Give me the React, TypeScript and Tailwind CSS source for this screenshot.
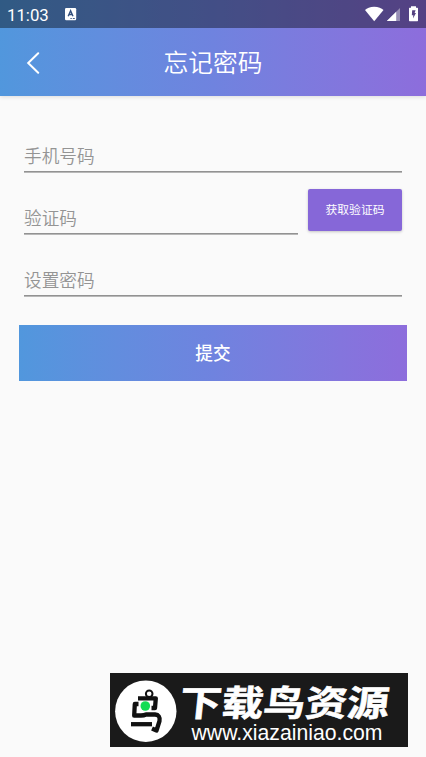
import React from 'react';

const cjk = "font-['Roboto','Noto_Sans_CJK_SC',sans-serif]";

function StatusBar() {
  return (
    <div className="flex h-7 items-center bg-black/40 pl-[7px] pr-[7px] text-white">
      <span className="w-[58px] pt-[3px] text-[16.8px] leading-[25px] font-[450]">11:03</span>
      <svg width="12" height="13" viewBox="0 0 12 13">
        <rect width="11.2" height="12.2" rx="1.2" fill="#fff" />
        <path d="M3.2 8.2L5.6 2.8L8 8.2M4 6.5H7.2" fill="none" stroke="#33507e" strokeWidth="1.4" />
        <path d="M5.4 10.5H6.8M7.8 10.5H9.8" stroke="#33507e" strokeWidth="0.9" />
      </svg>
      <svg className="ml-auto" width="54" height="16" viewBox="0 0 54 16">
        <path d="M0 4C2 2.2 5 .8 9.2 .8S16.5 2.2 18.5 4L9.2 15.2Z" fill="#fff" />
        <path d="M35 2V15H21.8Z" fill="#fff" fillOpacity=".4" />
        <path d="M31.2 5.8V15H21.8Z" fill="#fff" />
        <path d="M46 .3H51V1.7H52.4Q53 1.7 53 2.4V14.6Q53 15.3 52.4 15.3H44.6Q44 15.3 44 14.6V2.4Q44 1.7 44.6 1.7H46Z" fill="#fff" />
        <path d="M47.2 4.2H50.6L49.6 7H51L48 12.6L48.3 9.2H46.8Z" fill="#54417f" />
      </svg>
    </div>
  );
}

function Field({ label }: { label: string }) {
  return (
    <div className="flex h-[29px] w-full flex-col justify-between">
      <span className="text-[17.65px] leading-[26px] font-[350] text-[#949494]">{label}</span>
      <div className="h-[2px] shrink-0 border-t border-[#929292] bg-[#b8b8b8]" />
    </div>
  );
}

function Watermark() {
  return (
    <svg className="block" width="298" height="74" viewBox="0 0 298 74">
      <rect width="298" height="74" fill="#1a1a1a" />
      <circle cx="35.8" cy="38.2" r="30.7" fill="#fff" />
      <g fill="none" stroke="#111" strokeWidth="4.3" strokeLinejoin="round">
        <circle cx="39.2" cy="20.8" r="3.3" strokeWidth="2" />
        <path d="M28 25.3H45.8L45 35H41.5" />
        <path d="M28.5 31H24.8L24.2 42.5H31Q34 42.5 36 41.5H45Q50.5 42 49.5 48L46.5 57.5L42 55.5" />
        <path d="M21 51.2H42" />
      </g>
      <circle cx="35.3" cy="33" r="4.8" fill="#13dc55" />
      <text x="0" y="0" transform="translate(68.5 43) skewX(-6) scale(1.17 1)" fill="#fff" stroke="#fff" strokeWidth=".6" fontSize="35.6" fontWeight="700" fontFamily="'Noto Sans CJK SC', sans-serif" textLength="179" lengthAdjust="spacingAndGlyphs">下载鸟资源</text>
      <text x="81.5" y="67.2" fill="#fff" fontSize="21.8" fontFamily="'Liberation Sans', Arial, sans-serif" textLength="191" lengthAdjust="spacingAndGlyphs">www.xiazainiao.com</text>
    </svg>
  );
}

export default function App() {
  return (
    <main className={`flex h-[757px] w-[426px] flex-col overflow-hidden bg-[#fafafa] ${cjk}`}>
      <header className="h-24 shrink-0 bg-linear-to-r from-[#5197dd] via-[#6f83df] to-[#8d6ddc] shadow-[0_1px_4px_rgba(0,0,0,0.12)]">
        <StatusBar />
        <div className="grid h-[68px] grid-cols-[66px_1fr_66px] items-center pt-[2px]">
          <svg className="ml-[26px]" width="15" height="22" viewBox="0 0 15 22">
            <path d="M12.2 1.2L2.2 11L12.2 20.8" fill="none" stroke="#fff" strokeWidth="2" strokeLinecap="round" />
          </svg>
          <h1 className="pt-[2px] text-center text-[24.7px] leading-9 font-[350] text-white">忘记密码</h1>
        </div>
      </header>
      <form className="px-6 pt-12" onSubmit={(e) => e.preventDefault()}>
        <Field label="手机号码" />
        <div className="flex items-start pt-4">
          <div className="w-[274px] pt-[17px]"><Field label="验证码" /></div>
          <button type="button" className="ml-[10px] h-[42px] w-[94px] rounded-[2px] bg-[#8667d8] pt-[2px] text-[11.8px] text-white shadow-[0_1px_3px_rgba(0,0,0,0.22)]">获取验证码</button>
        </div>
        <div className="pt-[33px]"><Field label="设置密码" /></div>
        <button type="submit" className="-mx-[5px] mt-7 block h-14 w-[388px] bg-linear-to-r from-[#5197dd] via-[#6f83df] to-[#8d6ddc] pt-[2px] text-[17.65px] font-medium text-white">提交</button>
      </form>
      <footer className="mt-auto mb-[10px] ml-[110px]"><Watermark /></footer>
    </main>
  );
}
